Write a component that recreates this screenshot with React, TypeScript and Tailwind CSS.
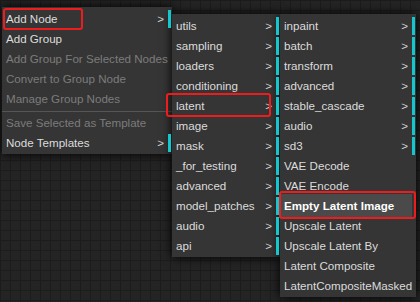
import React from "react";

type Item = {
  label: string;
  sub?: boolean;
  disabled?: boolean;
  sep?: boolean;
  hover?: boolean;
  mark?: string;
};

const mainItems: Item[] = [
  { label: "Add Node", sub: true, mark: "left-px -top-[2px] w-[80px] h-[22px]" },
  { label: "Add Group" },
  { label: "Add Group For Selected Nodes", disabled: true },
  { label: "Convert to Group Node", disabled: true },
  { label: "Manage Group Nodes", disabled: true },
  { label: "", sep: true },
  { label: "Save Selected as Template", disabled: true },
  { label: "Node Templates", sub: true },
];

const categoryItems: Item[] = [
  "utils",
  "sampling",
  "loaders",
  "conditioning",
  "latent",
  "image",
  "mask",
  "_for_testing",
  "advanced",
  "model_patches",
  "audio",
  "api",
].map((label) => ({
  label,
  sub: true,
  mark: label === "latent" ? "-left-[6px] -top-[4px] w-[105px] h-[24px]" : undefined,
}));

const latentItems: Item[] = [
  { label: "inpaint", sub: true },
  { label: "batch", sub: true },
  { label: "transform", sub: true },
  { label: "advanced", sub: true },
  { label: "stable_cascade", sub: true },
  { label: "audio", sub: true },
  { label: "sd3", sub: true },
  { label: "VAE Decode" },
  { label: "VAE Encode" },
  { label: "Empty Latent Image", hover: true, mark: "-left-px -top-[6px] w-[137px] h-[28px]" },
  { label: "Upscale Latent" },
  { label: "Upscale Latent By" },
  { label: "Latent Composite" },
  { label: "LatentCompositeMasked" },
];

function Entry({ item }: { item: Item }) {
  if (item.sep) {
    return <div className="h-[2px] border-b border-[#555555]" />;
  }
  return (
    <div
      className={[
        "relative flex items-center h-[18px] pl-1 pr-[4px] mr-px whitespace-nowrap border-r-[3px]",
        item.sub ? "border-[#14c6ce]" : "border-transparent",
        item.hover ? "text-white font-bold" : "",
        item.disabled ? "text-[#7c7c7c]" : item.hover ? "" : "text-[#dcdcdc]",
      ].join(" ")}
    >
      {item.hover && <div className="absolute -left-px right-0 -top-[3px] -bottom-[3px] bg-[#4a4a4a]" />}
      <span className="relative">{item.label}</span>
      {item.sub && <span className="relative ml-auto pl-2 text-[#d0d0d0]">&gt;</span>}
      {/* red annotation frame */}
      {item.mark && (
        <div className={"absolute z-10 border-2 border-[#ee1c1c] rounded-[3px] " + item.mark} />
      )}
    </div>
  );
}

function Menu({ items, className }: { items: Item[]; className: string }) {
  return (
    <div
      className={
        "flex flex-col gap-[2px] pt-[3px] pb-[2px] bg-[#353535] shadow-[0_0_10px_#000] shrink-0 " +
        className
      }
    >
      {items.map((item, i) => (
        <Entry key={`${item.label}-${i}`} item={item} />
      ))}
    </div>
  );
}

export default function App() {
  return (
    <div className="w-[420px] h-[302px] overflow-hidden bg-[#242424] bg-[linear-gradient(#1c1c1c_1px,transparent_1px),linear-gradient(90deg,#1c1c1c_1px,transparent_1px)] bg-[size:10px_10px] font-['Liberation_Sans',Arial,sans-serif] text-[11.6px] leading-none">
      <div className="flex items-start pl-[2px]">
        <Menu items={mainItems} className="mt-[7px] w-[170px]" />
        <Menu items={categoryItems} className="mt-[14px] w-[108px]" />
        <Menu items={latentItems} className="mt-[14px] w-[136px]" />
      </div>
    </div>
  );
}
